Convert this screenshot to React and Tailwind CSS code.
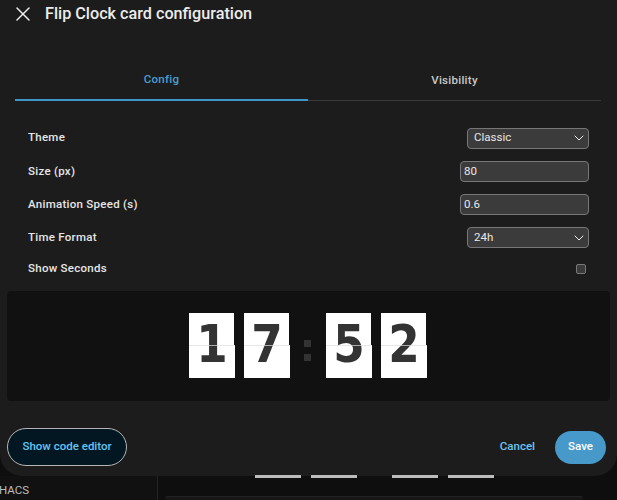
import { X, ChevronDown } from 'lucide-react'

const roboto = { fontFamily: 'Roboto, sans-serif' }

function FlipDigit({ value }) {
  return (
    <div className="relative h-[65px] w-[46px] bg-white text-center text-[52px] font-bold leading-[63px] text-[#333] [font-family:'DejaVu_Sans',sans-serif]">
      <span className="inline-block scale-x-[0.87]">{value}</span>
      {/* the fold, upper leaf is 1px narrower */}
      <div className="absolute left-0 top-[32px] h-px w-full bg-[#dddddd]/70" />
      <div className="absolute right-0 top-0 h-[32px] w-px bg-[#111111]" />
    </div>
  )
}

function Row({ label, height, children }) {
  return (
    <div className={`flex items-center justify-between ${height}`}>
      <span className="text-[11.5px] font-medium tracking-[0.27px] text-[#e6e6e6]">{label}</span>
      {children}
    </div>
  )
}

function SelectBox({ value }) {
  return (
    <div className="flex h-[21px] w-[122px] items-center justify-between rounded-[4px] border border-[#777] bg-[#3b3b3b] pl-[6px] pr-[1px] text-[11.5px] text-[#e8e8e8]">
      <span>{value}</span>
      <ChevronDown size={16} strokeWidth={1.5} color="#eee" />
    </div>
  )
}

function TextBox({ value }) {
  return (
    <div className="flex h-[21px] w-[129px] items-center rounded-[4px] border border-[#777] bg-[#3b3b3b] pl-[3px] text-[11.5px] text-[#e8e8e8]">
      {value}
    </div>
  )
}

export default function App() {
  return (
    <div className="h-[500px] w-[617px] overflow-hidden bg-[#0e0e0e]" style={roboto}>
      {/* dialog */}
      <div className="relative z-10 flex h-[476px] flex-col rounded-b-[22px] bg-[#1c1c1c]">
        <div className="flex h-[28px] items-center pl-[11px]">
          <X size={24} strokeWidth={1.5} color="#eee" />
          <h1 className="ml-[10px] text-[16.2px] font-medium text-[#ececec]">Flip Clock card configuration</h1>
        </div>

        {/* tabs */}
        <div className="mx-[15px] mr-[16px] mt-[32px] flex h-[41px] border-b border-[#3a3a3a]">
          <div className="-mb-px flex w-[293px] items-center justify-center border-b-2 border-[#3f97c9] pt-[1px] text-[11.5px] font-medium tracking-[0.27px] text-[#46a0d4]">
            Config
          </div>
          <div className="flex flex-1 items-center justify-center pt-[1px] text-[11.5px] font-medium tracking-[0.27px] text-[#c9c9c9]">
            Visibility
          </div>
        </div>

        {/* options */}
        <div className="mt-[20px] flex flex-col pl-[28px] pr-[28px]">
          <Row label="Theme" height="h-[34px]"><SelectBox value="Classic" /></Row>
          <Row label="Size (px)" height="h-[33px]"><TextBox value="80" /></Row>
          <Row label="Animation Speed (s)" height="h-[33px]"><TextBox value="0.6" /></Row>
          <Row label="Time Format" height="h-[33px]"><SelectBox value="24h" /></Row>
          <Row label="Show Seconds" height="h-[30px]">
            <div className="mr-[3px] h-[10px] w-[10px] rounded-[2px] border border-[#777] bg-[#3b3b3b]" />
          </Row>
        </div>

        {/* preview */}
        <div className="mx-[7px] mt-[7px] flex h-[110px] items-center justify-center rounded-[4px] bg-[#111111] pb-[2px] pr-[1px]">
          <div className="flex gap-[9px]">
            <FlipDigit value="1" />
            <FlipDigit value="7" />
          </div>
          <div className="mx-[14px] mt-[10px] flex w-[8px] flex-col gap-[7px]">
            <div className="h-[7px] w-[7px] bg-[#333]" />
            <div className="h-[7px] w-[7px] bg-[#333]" />
          </div>
          <div className="flex gap-[9px]">
            <FlipDigit value="5" />
            <FlipDigit value="2" />
          </div>
        </div>

        {/* footer */}
        <div className="mt-[27px] flex items-center px-[7px] pr-[11px]">
          <button className="h-[38px] w-[120px] rounded-full border border-[#b5b5b5] bg-[#031722] text-[11.5px] font-medium text-[#63c5f2]">
            Show code editor
          </button>
          <span className="ml-auto text-[11.5px] font-medium text-[#6cc5f0]">Cancel</span>
          <button className="ml-[20px] h-[33px] w-[51px] rounded-full bg-[#4799c9] text-[11.5px] font-medium text-white">
            Save
          </button>
        </div>
      </div>

      {/* dashboard behind the dialog */}
      <div className="flex h-[24px]">
        <div className="flex h-full w-[158px] items-end border-r border-[#242424] bg-[#111111] pb-[1px]">
          <span className="-ml-[1px] text-[11.5px] text-[#bdbdbd]">HACS</span>
        </div>
        <div className="flex flex-1 flex-col">
          <div className="relative z-20 -mt-[1px] ml-[97px] flex h-[4px] items-start gap-[10px]">
            <div className="h-[3px] w-[46px] bg-[#bcbcbc]" />
            <div className="h-[3px] w-[46px] bg-[#bcbcbc]" />
            <div className="ml-[25px] h-[3px] w-[46px] bg-[#bcbcbc]" />
            <div className="h-[3px] w-[46px] bg-[#bcbcbc]" />
          </div>
          <div className="ml-[7px] mr-[34px] mt-auto h-[4px] rounded-t-[2px] border-t border-[#232323] bg-[#161616]" />
        </div>
      </div>
    </div>
  )
}
